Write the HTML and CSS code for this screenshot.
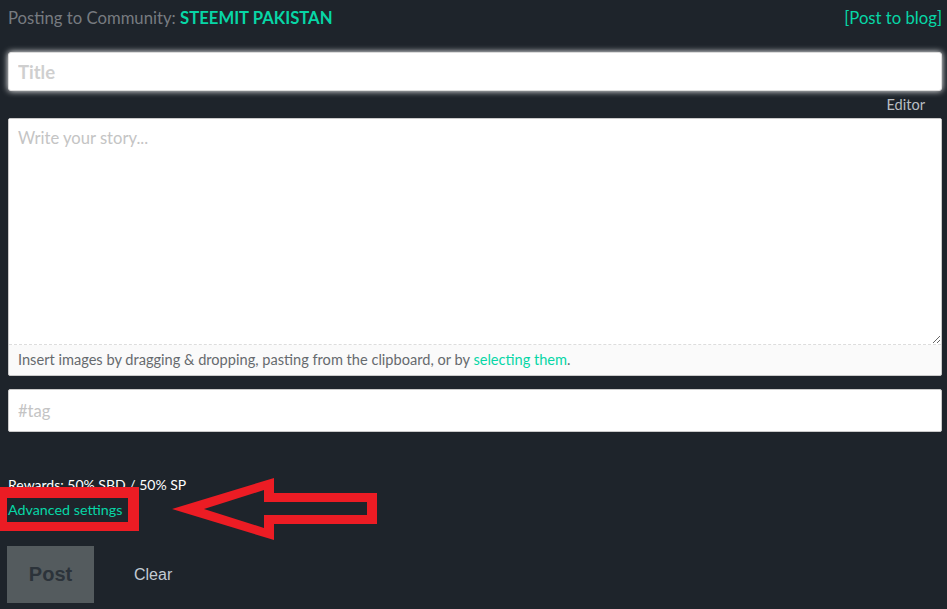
FILE: index.html
```html
<!DOCTYPE html>
<html>
<head>
    <link rel="stylesheet" href="styles.css">
</head>
<body>
    <div class="page">
        <div class="topline">
            <div><span class="muted">Posting to Community:</span> <span class="community">STEEMIT PAKISTAN</span></div>
            <a class="link">[Post to blog]</a>
        </div>

        <input type="text" class="title_input" placeholder="Title">

        <div class="editor_label">Editor</div>

        <div class="story_box">
            <textarea class="story" placeholder="Write your story..."></textarea>
            <div class="dropzone">Insert images by dragging &amp; dropping, pasting from the clipboard, or by <a class="link">selecting them</a>.</div>
        </div>

        <input type="text" class="tag_input" placeholder="#tag">

        <div class="rewards">Rewards: 50% SBD / 50% SP</div>
        <div class="advanced"><a class="link">Advanced settings</a></div>

        <div class="buttons">
            <div class="post_btn">Post</div>
            <div class="clear_btn">Clear</div>
        </div>
    </div>

    <!-- red annotation drawn over the page -->
    <div class="mark_box"></div>
    <svg class="mark_arrow" width="947" height="609" viewBox="0 0 947 609">
        <path fill="#ec1c24" fill-rule="evenodd"
              d="M172 509 L274 478 L274 493 L377 493 L377 524 L274 524 L274 540 Z
                 M204 509 L264 490 L264 502 L367 502 L367 515 L264 515 L264 528 Z"/>
    </svg>
</body>
</html>
```

FILE: styles.css
```css
body {
    margin: 0;
    padding: 0;
    background-color: #1e242b;
    font-family: Lato, "Noto Sans", sans-serif;
    position: relative;
    height: 609px;
    overflow: hidden;
}
.page {
    padding: 6px 5px 0 8px;
    display: flex;
    flex-direction: column;
}
.topline {
    display: flex;
    justify-content: space-between;
    font-size: 16.7px;
    line-height: 24px;
}
.muted {
    color: #777b80;
}
.community {
    color: #07d6a6;
    font-weight: bold;
}
.link {
    color: #07d6a6;
    cursor: pointer;
}
.title_input {
    margin-top: 22px;
    height: 39px;
    box-sizing: border-box;
    border: 1px solid #dcdcdc;
    border-radius: 3px;
    box-shadow: 0 0 6px #ffffff;
    padding: 0 9px;
    font-family: inherit;
    font-size: 18.5px;
    font-weight: bold;
    outline: none;
}
.title_input::placeholder {
    color: #cfcfcf;
}
.editor_label {
    text-align: right;
    padding-right: 17px;
    color: #b9bdc2;
    font-size: 14.6px;
    line-height: 27px;
}
.story_box {
    background-color: #fafafa;
    border: 1px solid #cacaca;
    border-radius: 2px;
}
.story {
    display: block;
    width: 100%;
    height: 226px;
    box-sizing: border-box;
    border: none;
    border-bottom: 1px dashed #dddddd;
    background-color: #ffffff;
    padding: 9px 9px;
    font-family: inherit;
    font-size: 16.6px;
    outline: none;
}
.story::placeholder {
    color: #c4c4c4;
}
.dropzone {
    color: #666a6e;
    font-size: 14.6px;
    padding: 6px 9px 7px;
}
.tag_input {
    margin-top: 13px;
    height: 43px;
    box-sizing: border-box;
    border: 1px solid #cacaca;
    border-radius: 2px;
    padding: 0 9px;
    font-family: inherit;
    font-size: 16.6px;
    outline: none;
}
.tag_input::placeholder {
    color: #c4c4c4;
}
.rewards {
    margin-top: 42px;
    color: #ffffff;
    font-size: 14px;
    line-height: 22px;
}
.advanced {
    font-size: 14.3px;
    line-height: 28px;
}
.buttons {
    margin-top: 22px;
    display: flex;
    align-items: center;
}
.post_btn {
    margin-left: -1px;
    width: 87px;
    height: 57px;
    line-height: 57px;
    text-align: center;
    background-color: #545b5e;
    color: #2c333a;
    font-family: "Liberation Sans", Arial, sans-serif;
    font-weight: bold;
    font-size: 20px;
}
.clear_btn {
    margin-left: 40px;
    color: #c3cbd3;
    font-family: "Liberation Sans", Arial, sans-serif;
    font-size: 16px;
}
.mark_box {
    position: absolute;
    left: 0;
    top: 487px;
    width: 121px;
    height: 24px;
    border-style: solid;
    border-color: #ec1c24;
    border-width: 11px 11px 9px 7px;
}
.mark_arrow {
    position: absolute;
    left: 0;
    top: 0;
    pointer-events: none;
}
```
